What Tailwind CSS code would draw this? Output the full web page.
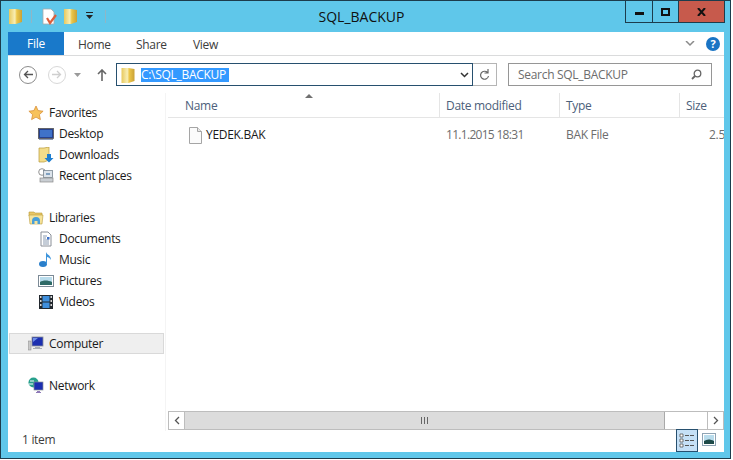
<!DOCTYPE html>
<html lang="en">
<head>
<meta charset="UTF-8">
<script src="https://cdn.jsdelivr.net/npm/@tailwindcss/browser@4"></script>
<title>SQL_BACKUP</title>
</head>
<body class="bg-white overflow-hidden">
<svg width="0" height="0" class="absolute">
  <defs>
    <linearGradient id="fold" x1="0" x2="1" y1="0" y2="0">
      <stop offset="0" stop-color="#e8c95e"/><stop offset=".45" stop-color="#f8eeb4"/><stop offset=".6" stop-color="#ecc649"/><stop offset="1" stop-color="#c9a136"/>
    </linearGradient>
  </defs>
</svg>
<div class="w-[733px] h-[460px] font-['Open_Sans',sans-serif] text-[12px] text-[#1a1a1a] tracking-[-0.3px]">
  <!-- window -->
  <div class="w-[731px] h-[459px] bg-[#5fc7ea] border border-[#1c3c4c] flex flex-col pl-[7px] pr-[6px] pb-[6px]">
    <!-- title bar -->
    <div class="h-[31px] shrink-0 flex relative">
      <div class="flex items-center gap-[6px] h-[30px] pl-[1px]">
        <svg width="13" height="16" viewBox="0 0 13 16"><path d="M0 1h7l6 1v12l-6 2H0z" fill="url(#fold)"/></svg>
        <div class="w-px h-[13px] bg-[#8fb6c6] ml-[3px]"></div>
        <svg class="ml-[4px]" width="16" height="17" viewBox="0 0 16 17"><path d="M1 1h8l3 3v12H1z" fill="#fff" stroke="#a9a9a9" stroke-width=".8"/><path d="M5 10l3 5 6-8" fill="none" stroke="#dc5f3c" stroke-width="2.200"/></svg>
        <svg width="13" height="16" viewBox="0 0 13 16"><path d="M0 1h7l6 1v12l-6 2H0z" fill="url(#fold)"/></svg>
        <svg class="ml-[2px]" width="9" height="8" viewBox="0 0 9 8"><path d="M1 0h7v1H1zM1 3h7L4.500 7z" fill="#222"/></svg>
        <div class="w-px h-[13px] bg-[#8fb6c6] ml-[5px]"></div>
      </div>
      <div class="absolute left-0 w-[707px] top-[7px] text-center text-[14px] tracking-normal leading-[18px] text-[#101010]">SQL_BACKUP</div>
      <div class="ml-auto flex h-[22px] mr-[-1px] border border-t-0 border-[#1c3c4c] relative">
        <div class="w-[27px] flex items-center justify-center border-r border-[#1c3c4c]"><div class="w-[9px] h-[3px] bg-[#111] mt-[4px]"></div></div>
        <div class="w-[26px] flex items-center justify-center border-r border-[#1c3c4c]"><div class="w-[9px] h-[8px] border-2 border-[#111]"></div></div>
        <div class="w-[45px] flex items-center justify-center bg-[#c75a4c]"><svg width="9" height="8" viewBox="0 0 9 8"><path d="M1 0l7 8M8 0L1 8" stroke="#111" stroke-width="2"/></svg></div>
      </div>
    </div>

    <!-- client area -->
    <div class="flex-1 bg-white flex flex-col min-h-0">
      <!-- ribbon tabs -->
      <div class="h-[24px] shrink-0 flex items-center border-b border-[#dadbdc] relative">
        <div class="w-[56px] h-[23px] bg-[#1979ca] text-white flex items-center justify-center">File</div>
        <div class="ml-[14px] pt-[2px] w-[30px] text-[#3c3c3c]">Home</div>
        <div class="ml-[28px] pt-[2px] w-[29px] text-[#3c3c3c]">Share</div>
        <div class="ml-[28px] pt-[2px] text-[#3c3c3c]">View</div>
        <svg class="ml-auto mr-[5px]" width="10" height="6" viewBox="0 0 10 6"><path d="M1 0l4 4 4-4" fill="none" stroke="#8a8a8a" stroke-width="1.500"/></svg>
        <div class="w-[14px] h-[14px] mr-[4px] ml-[6px] rounded-full bg-[#1a74c4] text-white text-[11px] font-bold flex items-center justify-center leading-none">?</div>
      </div>

      <!-- nav bar -->
      <div class="h-[37px] shrink-0 flex items-center relative">
        <div class="w-[18px] h-[18px] ml-[11px] rounded-full border border-[#8c8c8c] flex items-center justify-center">
          <svg width="10" height="9" viewBox="0 0 10 9"><path d="M5 1L1.500 4.500 5 8M2 4.500h8" fill="none" stroke="#555" stroke-width="1.300"/></svg>
        </div>
        <div class="w-[18px] h-[18px] ml-[11px] rounded-full border border-[#d8d8d8] flex items-center justify-center">
          <svg width="10" height="9" viewBox="0 0 10 9"><path d="M5 1l3.500 3.500L5 8M0 4.500h8" fill="none" stroke="#cfcfcf" stroke-width="1.300"/></svg>
        </div>
        <svg class="ml-[8px]" width="7" height="4" viewBox="0 0 7 4"><path d="M0 0h7L3.500 4z" fill="#9a9a9a"/></svg>
        <svg class="ml-[16px]" width="10" height="12" viewBox="0 0 10 12"><path d="M5 1v11M1 5l4-4 4 4" fill="none" stroke="#666" stroke-width="1.600"/></svg>
        <!-- address -->
        <div class="ml-[9px] w-[357px] h-[23px] border border-[#27506f] flex items-center">
          <svg class="ml-[4px]" width="14" height="16" viewBox="0 0 13 16"><path d="M0 1h7l6 1v12l-6 2H0z" fill="url(#fold)"/></svg>
          <div class="ml-[6px] bg-[#3399ff] text-white w-[88px] h-[14px] leading-[14px] whitespace-nowrap">C:\SQL_BACKUP</div>
          <svg class="ml-auto mr-[3px]" width="9" height="6" viewBox="0 0 9 6"><path d="M1 1l3.500 3.500L8 1" fill="none" stroke="#333" stroke-width="1.500"/></svg>
        </div>
        <div class="w-[24px] h-[23px] border border-l-0 border-[#b5b5b5] flex items-center justify-center">
          <svg width="11" height="12" viewBox="0 0 11 12"><path d="M8.500 3.500A4 4 0 1 0 9.500 7M9 0v4H5.500" fill="none" stroke="#666" stroke-width="1.200"/></svg>
        </div>
        <!-- search -->
        <div class="ml-[11px] w-[204px] h-[23px] border border-[#969696] flex items-center pl-[9px] text-[#6d6d6d]">
          Search SQL_BACKUP
          <svg class="ml-auto mr-[9px]" width="11" height="11" viewBox="0 0 11 11"><circle cx="6.500" cy="4.500" r="3.300" fill="none" stroke="#666" stroke-width="1.300"/><path d="M4 7l-3 3" stroke="#666" stroke-width="1.800"/></svg>
        </div>
      </div>

      <!-- main -->
      <div class="flex-1 flex min-h-0">
        <!-- nav pane -->
        <div class="w-[158px] shrink-0 pt-[9px] pl-[1px] pr-[1px] border-r border-[#f4f4f4]">
          <div class="h-[21px] flex items-center pl-[19px] gap-[5px]">
            <svg width="16" height="16" viewBox="0 0 16 16"><path d="M8 1l2.100 4.600 5 .6-3.700 3.400 1 5L8 12.100 3.600 14.600l1-5L.9 6.200l5-.6z" fill="#f7c25c" stroke="#d8903a" stroke-width=".8"/></svg>Favorites
          </div>
          <div class="h-[21px] flex items-center pl-[29px] gap-[5px]">
            <svg width="16" height="14" viewBox="0 0 16 14"><rect x="0.500" y="1.500" width="15" height="10" fill="#26418f" stroke="#555" stroke-width=".8"/><rect x="2" y="3" width="12" height="7" fill="#3f72c8"/><path d="M1 12h14v1H1z" fill="#8a99b5"/></svg>Desktop
          </div>
          <div class="h-[21px] flex items-center pl-[29px] gap-[5px]">
            <svg width="16" height="16" viewBox="0 0 16 16"><path d="M1 1h5l5-1v13l-5 2H1z" fill="#f3dd8a" stroke="#b89a3a" stroke-width=".7"/><path d="M9 7h4v4h2.500L11 15.500 6.500 11H9z" fill="#1f7fd0"/></svg>Downloads
          </div>
          <div class="h-[21px] flex items-center pl-[29px] gap-[5px]">
            <svg width="16" height="15" viewBox="0 0 16 15"><circle cx="4" cy="4" r="3.300" fill="#fff" stroke="#777" stroke-width=".8"/><rect x="5.500" y="2.500" width="9" height="7" fill="#dce3ea" stroke="#7b8792" stroke-width=".8"/><rect x="2" y="10" width="13" height="4" fill="#c9ced3" stroke="#8a8a8a" stroke-width=".7"/><path d="M8 5h4v2H8z" fill="#7fa0c0"/></svg>Recent places
          </div>
          <div class="h-[21px]"></div>
          <div class="h-[21px] flex items-center pl-[19px] gap-[5px]">
            <svg width="16" height="15" viewBox="0 0 16 15"><path d="M1 2h5l1 1h7v3H1z" fill="#e9c766" stroke="#b89a3a" stroke-width=".6"/><path d="M1 5h14l-1 9H2z" fill="#f6e39a" stroke="#b89a3a" stroke-width=".6"/><path d="M4 14v-3a4 4 0 0 1 8 0v3z" fill="#4a9fd8"/><path d="M6.500 14v-3h3v3z" fill="#f6e39a"/></svg>Libraries
          </div>
          <div class="h-[21px] flex items-center pl-[29px] gap-[5px]">
            <svg width="16" height="16" viewBox="0 0 16 16"><path d="M3 1h7l3 3v11H3z" fill="#fff" stroke="#8a8f98"/><path d="M5 5h4M5 7h3M5 9h6M5 11h6M5 13h6" stroke="#8b9bb0"/><rect x="9" y="6" width="2.500" height="2.500" fill="#3f72c8"/></svg>Documents
          </div>
          <div class="h-[21px] flex items-center pl-[29px] gap-[5px]">
            <svg width="16" height="17" viewBox="0 0 16 17"><ellipse cx="5" cy="13" rx="4" ry="3" fill="#2a7fcb"/><path d="M8 13V1c1 3 5 3 5 8-1-2-3-3-4-3v7z" fill="#3f95dc"/></svg>Music
          </div>
          <div class="h-[21px] flex items-center pl-[29px] gap-[5px]">
            <svg width="16" height="14" viewBox="0 0 16 14"><rect x=".5" y="1.500" width="15" height="11" fill="#fff" stroke="#7c8a96"/><rect x="2" y="3" width="12" height="8" fill="#b9dcec"/><path d="M2 8c3-2 8-2 12 0v3H2z" fill="#2e6a66"/></svg>Pictures
          </div>
          <div class="h-[21px] flex items-center pl-[29px] gap-[5px]">
            <svg width="16" height="16" viewBox="0 0 16 16"><rect x="1" y="1" width="14" height="14" fill="#22282e"/><rect x="4.500" y="2" width="7" height="5.500" fill="#3f8fdc"/><rect x="4.500" y="8.500" width="7" height="5.500" fill="#3f8fdc"/><path d="M2 2h1.500v2H2zM2 6h1.500v2H2zM2 10h1.500v2H2zM12.500 2H14v2h-1.500zM12.500 6H14v2h-1.500zM12.500 10H14v2h-1.500z" fill="#d5d5d5"/></svg>Videos
          </div>
          <div class="h-[21px]"></div>
          <div class="h-[21px] flex items-center pl-[18px] gap-[5px] bg-[#efefef] border-y border-[#d9d9d9] border-x">
            <svg width="16" height="15" viewBox="0 0 16 15"><rect x="0.500" y="5" width="2.500" height="9" fill="#c9c9c9" stroke="#888" stroke-width=".5"/><rect x="4" y="1" width="11" height="9" fill="#1c2fb0" stroke="#8a8f98" stroke-width=".8"/><path d="M5 2h5l-5 4z" fill="#6f8fe8"/><path d="M7 11h5v1h2v1H5v-1h2z" fill="#a8adb3"/></svg>Computer
          </div>
          <div class="h-[21px]"></div>
          <div class="h-[21px] flex items-center pl-[19px] gap-[5px]">
            <svg width="16" height="17" viewBox="0 0 16 17"><circle cx="5.500" cy="5.500" r="5" fill="#27a08c"/><path d="M2 4h4M1 7h4" stroke="#fff"/><rect x="6" y="5" width="9" height="8" fill="#1c2fb0" stroke="#8a8f98" stroke-width=".7"/><path d="M9 14h3v1h1v1H8v-1h1z" fill="#8f7ab8"/></svg>Network
          </div>
        </div>

        <!-- file list -->
        <div class="flex-1 flex flex-col min-w-0 pl-[2px]">
          <div class="h-[25px] shrink-0 flex border-b border-[#e5e5e5] relative text-[#4c607a]">
            <svg class="absolute left-[137px] top-[1px]" width="8" height="4" viewBox="0 0 8 4"><path d="M4 0l4 4H0z" fill="#707070"/></svg>
            <div class="w-[272px] pl-[17px] pt-[4px] border-r border-[#e5e5e5]">Name</div>
            <div class="w-[120px] pl-[6px] pt-[4px] border-r border-[#e5e5e5]">Date modified</div>
            <div class="w-[120px] pl-[6px] pt-[4px] border-r border-[#e5e5e5]">Type</div>
            <div class="flex-1 pl-[6px] pt-[4px]">Size</div>
          </div>
          <div class="flex-1 min-h-0">
            <div class="flex h-[22px] items-center mt-[6px] overflow-hidden">
              <div class="w-[272px] pl-[20px] flex items-center gap-[3px] shrink-0">
                <svg width="15" height="17" viewBox="0 0 15 17"><path d="M1.500.5h8l4 4v12h-12z" fill="#fbfbfb" stroke="#a5a5a5"/><path d="M9.500.5v4h4" fill="#e8e8e8" stroke="#a5a5a5"/></svg>
                YEDEK.BAK
              </div>
              <div class="w-[120px] pl-[6px] text-[#6d6d6d] shrink-0 tracking-[-0.7px]">11.1.2015 18:31</div>
              <div class="w-[120px] pl-[6px] text-[#6d6d6d] shrink-0">BAK File</div>
              <div class="flex-1 pl-[29px] text-[#6d6d6d] whitespace-nowrap">2.5</div>
            </div>
          </div>
          <!-- horizontal scrollbar -->
          <div class="h-[19px] shrink-0 flex items-stretch border-t border-b border-[#bdbdbd] mb-[1px]">
            <div class="w-[17px] border-x border-[#bdbdbd] flex items-center justify-center">
              <svg width="6" height="9" viewBox="0 0 6 9"><path d="M5 1L1.500 4.500 5 8" fill="none" stroke="#555" stroke-width="1.300"/></svg>
            </div>
            <div class="w-[480px] bg-[#dcdcdc] border-r border-[#a9a9a9] flex items-center justify-center">
              <svg width="8" height="7" viewBox="0 0 8 7"><path d="M.5 0v7M3.500 0v7M6.500 0v7" stroke="#666"/></svg>
            </div>
            <div class="flex-1"></div>
            <div class="w-[17px] border-x border-[#bdbdbd] flex items-center justify-center">
              <svg width="6" height="9" viewBox="0 0 6 9"><path d="M1 1l3.500 3.500L1 8" fill="none" stroke="#555" stroke-width="1.300"/></svg>
            </div>
          </div>
        </div>
      </div>

      <!-- status bar -->
      <div class="h-[21px] shrink-0 flex items-center pl-[14px] relative text-[#3c3c3c]">
        <span class="-mt-[3px]">1 item</span>
        <div class="ml-auto mr-[26px] w-[22px] h-[23px] -mt-[2px] bg-[#c5e0f6] border border-[#27506f] flex items-center justify-center">
          <svg width="16" height="15" viewBox="0 0 16 15"><path d="M1 1h3v3H1zM1 6h3v3H1zM1 11h3v3H1z" fill="#fff" stroke="#555" stroke-width=".8"/><path d="M6 2.500h4M11 2.500h4M6 7.500h4M11 7.500h4M6 12.500h4M11 12.500h4" stroke="#555"/></svg>
        </div>
        <div class="absolute right-[8px] top-[2px]">
          <svg width="14" height="13" viewBox="0 0 14 13"><rect x=".5" y=".5" width="13" height="12" fill="#fff" stroke="#8fa4b4"/><rect x="2" y="2" width="10" height="9" fill="#b9dcec"/><path d="M2 8c3-2 6-2 10 0v3H2z" fill="#1d4a48"/></svg>
        </div>
      </div>
    </div>
  </div>
</div>
</body>
</html>
